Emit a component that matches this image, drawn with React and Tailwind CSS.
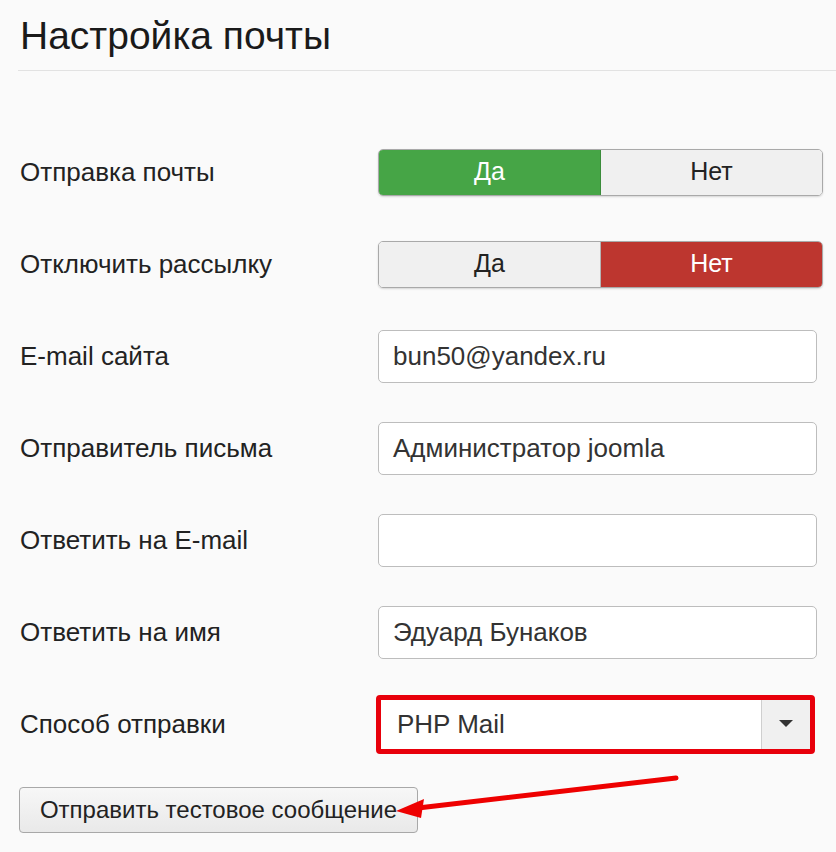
import React from 'react'

const font = { fontFamily: '"Liberation Sans", Arial, sans-serif' }

function Toggle({ yes }) {
  return (
    <div className="flex w-[445px] h-[47px] rounded-[5px] overflow-hidden border border-[#a9a9a9] shadow-[0_1px_2px_rgba(0,0,0,0.15)]">
      <div
        className={
          yes
            ? 'flex-1 flex items-center justify-center bg-[#46a546] text-white text-[25px] border-r border-[#3b8c3b]'
            : 'flex-1 flex items-center justify-center bg-[#f0f0f0] text-[#222] text-[25px] border-r border-[#b5b5b5]'
        }
      >
        Да
      </div>
      <div
        className={
          yes
            ? 'flex-1 flex items-center justify-center bg-[#f0f0f0] text-[#222] text-[25px]'
            : 'flex-1 flex items-center justify-center bg-[#bd362f] text-white text-[25px]'
        }
      >
        Нет
      </div>
    </div>
  )
}

function Field({ value }) {
  return (
    <div className="w-[439px] h-[53px] bg-white border border-[#bdbdbd] rounded-[5px] flex items-center px-[14px] text-[26px] text-[#333]">
      {value}
    </div>
  )
}

function Row({ label, children }) {
  return (
    <div className="flex items-center h-[92px]">
      <div className="w-[358px] text-[26px] text-[#222]">{label}</div>
      {children}
    </div>
  )
}

export default function App() {
  return (
    <div className="relative w-[836px] h-[852px] bg-[#fafafa] overflow-hidden" style={font}>
      <div className="pt-[13px] h-[71px] border-b border-[#e2e2e2] ml-[18px]">
        <h1 className="ml-[2px] text-[39px] leading-[46px] text-[#1a1a1a]">Настройка почты</h1>
      </div>

      <div className="pl-[20px] pt-[55px]">
        <Row label="Отправка почты">
          <Toggle yes />
        </Row>
        <Row label="Отключить рассылку">
          <Toggle />
        </Row>
        <Row label="E-mail сайта">
          <Field value="bun50@yandex.ru" />
        </Row>
        <Row label="Отправитель письма">
          <Field value="Администратор joomla" />
        </Row>
        <Row label="Ответить на E-mail">
          <Field value="" />
        </Row>
        <Row label="Ответить на имя">
          <Field value="Эдуард Бунаков" />
        </Row>
        <Row label="Способ отправки">
          <div className="-ml-[2px] w-[439px] h-[59px] border-[5px] border-[#e8000b] rounded-[4px] flex">
            <div className="flex-1 bg-white flex items-center pl-[16px] text-[26px] text-[#333]">PHP Mail</div>
            <div className="w-[49px] bg-[#f0f0f0] border-l border-[#cfcfcf] flex items-center justify-center">
              <svg width="14" height="8" viewBox="0 0 14 8">
                <path d="M0 0 L14 0 L7 7 Z" fill="#333" />
              </svg>
            </div>
          </div>
        </Row>

        <div className="pt-[17px]">
          <button className="-ml-[1px] h-[46px] w-[399px] rounded-[4px] border border-[#a8a8a8] bg-gradient-to-b from-[#f7f7f7] to-[#e9e9e9] text-[24px] text-[#222]">
            Отправить тестовое сообщение
          </button>
        </div>
      </div>

      <svg className="absolute left-0 top-0 pointer-events-none" width="836" height="852">
        <line x1="676" y1="778" x2="418" y2="808" stroke="#ee0000" strokeWidth="5" strokeLinecap="round" />
        <path d="M396 811 L424 799 L421 818 Z" fill="#ee0000" />
      </svg>
    </div>
  )
}
